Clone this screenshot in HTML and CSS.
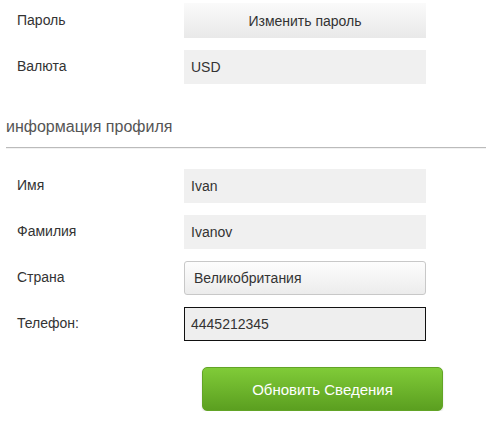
FILE: index.html
```html
<!DOCTYPE html>
<html lang="ru">
<head>
  <meta charset="UTF-8" />
  <title>Профиль</title>
  <link rel="stylesheet" href="styles.css">
</head>
<body>

  <div class="perfil">
    <div class="fila">
      <label class="etiqueta">Пароль</label>
      <button class="btn-pass">Изменить пароль</button>
    </div>
    <div class="fila">
      <label class="etiqueta">Валюта</label>
      <div class="campo">USD</div>
    </div>

    <h3 class="titulo">информация профиля</h3>

    <div class="fila">
      <label class="etiqueta">Имя</label>
      <div class="campo">Ivan</div>
    </div>
    <div class="fila">
      <label class="etiqueta">Фамилия</label>
      <div class="campo">Ivanov</div>
    </div>
    <div class="fila">
      <label class="etiqueta">Страна</label>
      <div class="campo select">Великобритания</div>
    </div>
    <div class="fila">
      <label class="etiqueta">Телефон:</label>
      <div class="campo activo">4445212345</div>
    </div>

    <div class="acciones">
      <button class="btn-guardar">Обновить Сведения</button>
    </div>
  </div>

</body>
</html>
```

FILE: styles.css
```css
body {
  margin: 0;
  font-family: "Liberation Sans", Arial, sans-serif;
  color: #333;
  background: #fff;
}
.perfil {
  padding: 3px 0 0 6px;
}
.fila {
  display: flex;
  align-items: center;
  margin-bottom: 12px;
}
.etiqueta {
  width: 167px;
  padding-left: 11px;
  padding-bottom: 2px;
  font-size: 14px;
  color: #333;
}
.campo {
  box-sizing: border-box;
  width: 242px;
  height: 34px;
  padding: 0 7px;
  display: flex;
  align-items: center;
  background: #f0f0f0;
  font-size: 14px;
  color: #333;
}
.select {
  padding-left: 9px;
  border: 1px solid #c8c8c8;
  border-radius: 3px;
  background: linear-gradient(#fdfdfd, #ececec);
}
.activo {
  border: 1px solid #111;
  padding-left: 6px;
  background: #eee;
}
.btn-pass {
  box-sizing: border-box;
  width: 242px;
  height: 35px;
  border: none;
  background: linear-gradient(#fafafa, #e9e9e9);
  font-family: inherit;
  font-size: 14px;
  color: #333;
}
.titulo {
  margin: 33px 0 21px;
  padding-bottom: 10px;
  font-size: 16px;
  font-weight: normal;
  line-height: 20px;
  color: #555;
  border-bottom: 1px solid #bbb;
  box-shadow: 0 1px 0 #f2f2f2;
}
.acciones {
  padding: 14px 0 0 196px;
}
.btn-guardar {
  width: 241px;
  height: 44px;
  border: 1px solid #62a426;
  border-radius: 5px;
  background: linear-gradient(#80cb38, #5b9f20);
  box-shadow: 0 1px 2px rgba(0, 0, 0, 0.15);
  font-family: inherit;
  font-size: 15px;
  color: #fff;
}
```
